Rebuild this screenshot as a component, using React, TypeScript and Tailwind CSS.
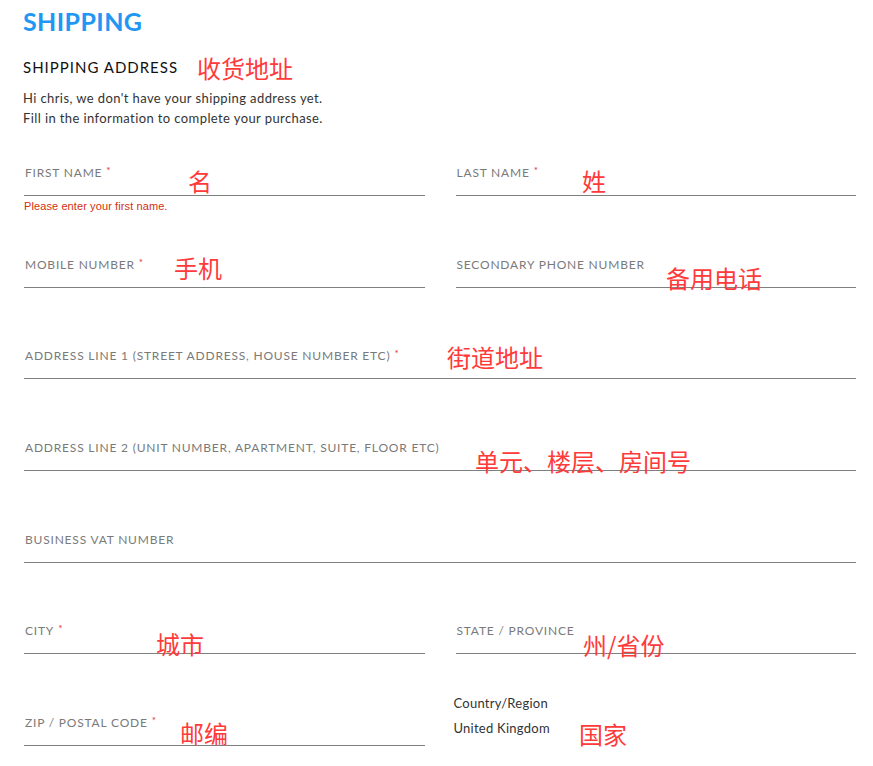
import React from "react";

const F = { fontFamily: "Lato, 'Noto Sans', sans-serif" };

function Field({ label, required, error }: { label: string; required?: boolean; error?: string }) {
  return (
    <div className="relative">
      <div className="h-[45px] border-b border-[#7f7f7f] pt-[14px] pl-[1px] text-[12px] leading-[16px] text-[#7a7a7a] tracking-[0.8px]">
        {label}
        {required && <span className="relative -top-[3px] text-[#e0302a] ml-[4px] text-[10px]">*</span>}
      </div>
      {error && (
        <div
          className="absolute left-0 top-[48px] text-[11px] leading-[14px] text-[#d2300f] tracking-[0.1px]"
          style={{ fontFamily: "'Liberation Sans', Arial, sans-serif" }}
        >
          {error}
        </div>
      )}
    </div>
  );
}

const notes: { t: string; x: number; y: number }[] = [
  { t: "收货地址", x: 197, y: 54 },
  { t: "名", x: 188, y: 167 },
  { t: "姓", x: 582, y: 167 },
  { t: "手机", x: 174, y: 254 },
  { t: "备用电话", x: 666, y: 264 },
  { t: "街道地址", x: 447, y: 343 },
  { t: "单元、楼层、房间号", x: 475, y: 447 },
  { t: "城市", x: 156, y: 630 },
  { t: "州/省份", x: 583, y: 631 },
  { t: "邮编", x: 180, y: 719 },
  { t: "国家", x: 579, y: 720 },
];

export default function App() {
  return (
    <div className="relative w-[873px] h-[766px] bg-white overflow-hidden" style={F}>
      <div className="pl-[23px] pr-[17px] pt-[6px]">
        <h1 className="text-[25px] leading-[30px] font-bold text-[#2196f3] tracking-[0.4px]">SHIPPING</h1>
        <h2 className="mt-[21px] text-[15px] leading-[20px] text-[#111] tracking-[1px]">SHIPPING ADDRESS</h2>
        <p className="mt-[11px] text-[13px] leading-[20px] text-[#333] tracking-[0.4px]">
          Hi chris, we don't have your shipping address yet.
          <br />
          Fill in the information to complete your purchase.
        </p>
        <div className="mt-[23px] pl-[1px] grid grid-cols-2 gap-x-[31px] gap-y-[46.66px]">
          <Field label="FIRST NAME" required error="Please enter your first name." />
          <Field label="LAST NAME" required />
          <Field label="MOBILE NUMBER" required />
          <Field label="SECONDARY PHONE NUMBER" />
          <div className="col-span-2">
            <Field label="ADDRESS LINE 1 (STREET ADDRESS, HOUSE NUMBER ETC)" required />
          </div>
          <div className="col-span-2">
            <Field label="ADDRESS LINE 2 (UNIT NUMBER, APARTMENT, SUITE, FLOOR ETC)" />
          </div>
          <div className="col-span-2">
            <Field label="BUSINESS VAT NUMBER" />
          </div>
          <Field label="CITY" required />
          <Field label="STATE / PROVINCE" />
          <Field label="ZIP / POSTAL CODE" required />
          <div className="-ml-[2px] -mt-[10px] text-[13px] text-[#333] tracking-[0.25px]">
            <div className="leading-[25px]">Country/Region</div>
            <div className="leading-[25px]">United Kingdom</div>
          </div>
        </div>
      </div>
      {notes.map((n) => (
        <div
          key={n.t}
          className="absolute text-[24px] leading-[28px] text-[#ff3a3a]"
          style={{ left: n.x, top: n.y, fontFamily: "'Noto Sans CJK SC', sans-serif" }}
        >
          {n.t}
        </div>
      ))}
    </div>
  );
}
